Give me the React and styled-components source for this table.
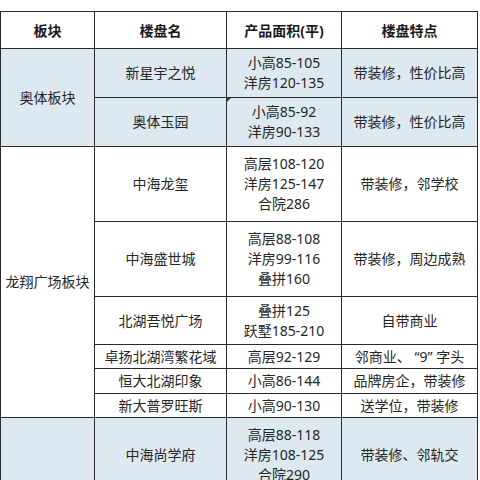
import React from 'react';
import styled, { createGlobalStyle } from 'styled-components';

const rows = [
  { group: '奥体板块', span: 2, name: '新星宇之悦', area: ['小高85-105', '洋房120-135'], note: '带装修，性价比高', shaded: true },
  { name: '奥体玉园', area: ['小高85-92', '洋房90-133'], note: '带装修，性价比高', shaded: true, marked: true },
  { group: '龙翔广场板块', span: 6, name: '中海龙玺', area: ['高层108-120', '洋房125-147', '合院286'], note: '带装修，邻学校' },
  { name: '中海盛世城', area: ['高层88-108', '洋房99-116', '叠拼160'], note: '带装修，周边成熟' },
  { name: '北湖吾悦广场', area: ['叠拼125', '跃墅185-210'], note: '自带商业' },
  { name: '卓扬北湖湾繁花域', area: ['高层92-129'], note: '邻商业、 “9” 字头' },
  { name: '恒大北湖印象', area: ['小高86-144'], note: '品牌房企，带装修' },
  { name: '新大普罗旺斯', area: ['小高90-130'], note: '送学位，带装修' },
  { group: '', span: 1, name: '中海尚学府', area: ['高层88-118', '洋房108-125', '合院290'], note: '带装修、邻轨交', shaded: true },
];

const App = () => {
  return (
    <>
      <GlobalStyle />
      <Page>
        <Grid>
          <Head>板块</Head>
          <Head>楼盘名</Head>
          <Head>产品面积(平)</Head>
          <Head>楼盘特点</Head>
          {rows.map((r) => (
            <React.Fragment key={r.name}>
              {r.group !== undefined && (
                <Cell $shaded={r.shaded} $span={r.span}>
                  {r.group}
                </Cell>
              )}
              <Cell $shaded={r.shaded}>{r.name}</Cell>
              <Cell $shaded={r.shaded} $marked={r.marked}>
                <Lines>
                  {r.area.map((a) => (
                    <span key={a}>{a}</span>
                  ))}
                </Lines>
              </Cell>
              <Cell $shaded={r.shaded}>{r.note}</Cell>
            </React.Fragment>
          ))}
        </Grid>
      </Page>
    </>
  );
};

export default App;

const GlobalStyle = createGlobalStyle`
  html, body {
    margin: 0;
    padding: 0;
    background: #fff;
    overflow: hidden;
  }
  body {
    font-family: "Noto Sans", "Noto Sans CJK SC", sans-serif;
    color: #262626;
  }
`;

const Page = styled.div`
  padding-top: 11px;
  width: 480px;
  height: 480px;
`;

const Grid = styled.div`
  display: grid;
  grid-template-columns: 93px 131px 114px 135px;
  grid-template-rows: 36px 48px 48px 74px 74px 47px 23px 24px 23px 74px;
  gap: 1px;
  padding: 1px;
  width: max-content;
  background: #2a2a2a;
`;

const Head = styled.div`
  display: flex;
  align-items: center;
  justify-content: center;
  background: #fff;
  font-size: 14px;
  font-weight: 700;
  color: #1a1a1a;
`;

const Cell = styled.div`
  position: relative;
  display: flex;
  align-items: center;
  justify-content: center;
  text-align: center;
  background: ${(p) => (p.$shaded ? '#dce9f1' : '#fff')};
  grid-row: ${(p) => (p.$span ? `span ${p.$span}` : 'auto')};
  font-size: 14px;
  line-height: 20px;
  white-space: nowrap;

  &::before {
    content: '';
    display: ${(p) => (p.$marked ? 'block' : 'none')};
    position: absolute;
    left: 0;
    top: 0;
    border-top: 4px solid #1f5a2a;
    border-right: 4px solid transparent;
  }
`;

const Lines = styled.div`
  display: flex;
  flex-direction: column;
  align-items: center;
`;
